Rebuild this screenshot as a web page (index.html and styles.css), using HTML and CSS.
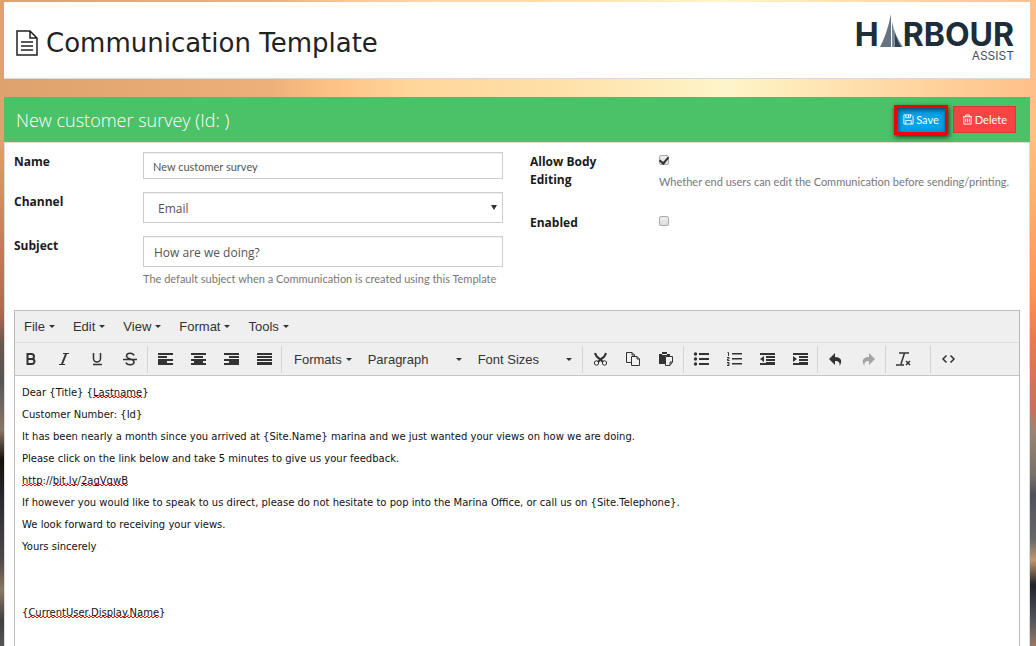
FILE: index.html
```html
<!DOCTYPE html>
<html lang="en">
<head>
<meta charset="utf-8">
<title>Communication Template</title>
<meta name="viewport" content="width=device-width, initial-scale=1">
<link rel="stylesheet" href="styles.css">
</head>
<body>
<header class="page-header">
  <h1 class="page-title">
    <svg class="title-icon" viewBox="0 0 22 26" aria-hidden="true"><path d="M1 1h13l7 7v17H1zM14 1v7h7M5 12h12M5 16h12M5 20h12"/></svg>
    <span>Communication Template</span>
  </h1>
  <div class="logo" role="img" aria-label="Harbour Assist">
    <div class="logo-main"><span>H</span><svg class="sail" viewBox="0 0 24 36" aria-hidden="true"><path class="sail-back" d="M1 33Q8 20 12 0V33Z"/><path class="sail-front" d="M13 8Q16 22 24 33H13Z"/><path class="sail-shade" d="M16 19Q19 28 22 33H16Z"/></svg><span>RBOUR</span></div>
    <div class="logo-sub">ASSIST</div>
  </div>
</header>
<main class="panel">
  <div class="panel-head">
    <h2 class="panel-title">New customer survey (Id: )</h2>
    <div class="actions">
      <button class="btn btn-save" type="button"><svg viewBox="0 0 12 12" aria-hidden="true"><path d="M1 1h8l2 2v8H1zM3 1v3h5V1M3 11V7h6v4M6 1v3"/></svg>Save</button>
      <button class="btn btn-delete" type="button"><svg viewBox="0 0 12 12" aria-hidden="true"><path d="M1 3h10M4 3V1h4v2M2 3v8h8V3M4 5v4M6 5v4M8 5v4"/></svg>Delete</button>
    </div>
  </div>
  <form class="panel-body">
    <div class="columns">
      <div class="column">
        <div class="field">
          <label class="label" for="name">Name</label>
          <div><input class="control control-small" id="name" type="text" value="New customer survey"></div>
        </div>
        <div class="field">
          <label class="label" for="channel">Channel</label>
          <div class="select-wrap"><select class="control control-select" id="channel"><option>Email</option></select></div>
        </div>
        <div class="field">
          <label class="label" for="subject">Subject</label>
          <div><input class="control" id="subject" type="text" value="How are we doing?"><p class="help">The default subject when a Communication is created using this Template</p></div>
        </div>
      </div>
      <div class="column column-right">
        <div class="field">
          <label class="label" for="editing">Allow Body Editing</label>
          <div><input class="check" id="editing" type="checkbox" checked><p class="help help-check">Whether end users can edit the Communication before sending/printing.</p></div>
        </div>
        <div class="field">
          <label class="label" for="enabled">Enabled</label>
          <div><input class="check" id="enabled" type="checkbox"></div>
        </div>
      </div>
    </div>
    <div class="editor">
      <div class="menubar">
        <button class="menu" type="button">File<i class="caret"></i></button>
        <button class="menu" type="button">Edit<i class="caret"></i></button>
        <button class="menu" type="button">View<i class="caret"></i></button>
        <button class="menu" type="button">Format<i class="caret"></i></button>
        <button class="menu" type="button">Tools<i class="caret"></i></button>
      </div>
      <div class="toolbar">
        <div class="group group-first">
          <button class="tool" type="button" aria-label="Bold"><svg viewBox="0 0 16 16"><path class="line thick" d="M4.500 3v10h4.500a2.500 2.500 0 0 0 0-5H5h3.500a2.500 2.500 0 0 0 0-5z"/></svg></button>
          <button class="tool" type="button" aria-label="Italic"><svg viewBox="0 0 16 16"><path class="line" d="M7 2.500h6M3 13.500h6"/><path class="line thick" d="M10 3L6 13"/></svg></button>
          <button class="tool" type="button" aria-label="Underline"><svg viewBox="0 0 16 16"><path class="line mid" d="M4.500 2v5.500a3.500 3.500 0 0 0 7 0V2M4 13.500h9"/></svg></button>
          <button class="tool" type="button" aria-label="Strikethrough"><svg viewBox="0 0 16 16"><path class="line mid" d="M12 4.500C11 1.500 4.500 1.500 4.500 5c0 3.500 7.500 2.500 7.500 6 0 3.500-7 3.500-8 .5M1 8.500h14"/></svg></button>
        </div>
        <div class="group">
          <button class="tool" type="button" aria-label="Align left"><svg viewBox="0 0 16 16"><path d="M1 2h15v2H1zM1 5h9v2H1zM1 8h15v2H1zM1 10h9v2H1zM1 12h15v2H1z"/></svg></button>
          <button class="tool" type="button" aria-label="Align center"><svg viewBox="0 0 16 16"><path d="M1 2h15v2H1zM4 5h9v2H4zM1 8h15v2H1zM4 10h9v2H4zM1 12h15v2H1z"/></svg></button>
          <button class="tool" type="button" aria-label="Align right"><svg viewBox="0 0 16 16"><path d="M1 2h15v2H1zM6 5h10v2H6zM1 8h15v2H1zM6 10h10v2H6zM1 12h15v2H1z"/></svg></button>
          <button class="tool" type="button" aria-label="Justify"><svg viewBox="0 0 16 16"><path d="M1 2h15v2H1zM1 5h15v2H1zM1 8h15v2H1zM1 11h15v3H1z"/></svg></button>
        </div>
        <div class="group group-menus">
          <button class="menu" type="button">Formats<i class="caret"></i></button>
          <button class="menu menu-wide" type="button">Paragraph<i class="caret"></i></button>
          <button class="menu menu-wide" type="button">Font Sizes<i class="caret"></i></button>
        </div>
        <div class="group">
          <button class="tool" type="button" aria-label="Cut"><svg viewBox="0 0 16 16"><path class="line thick" d="M3 2q1 4 5 6l3 3M14 2q-1 4-5 6l-3 3"/><circle class="line" cx="4.500" cy="12" r="2.200"/><circle class="line" cx="12.500" cy="12" r="2.200"/></svg></button>
          <button class="tool" type="button" aria-label="Copy"><svg viewBox="0 0 16 16"><path class="line thin" d="M6 11.500H1.500v-10H7L9.500 4v1M7 1.500V4h2.500M6.500 5.500H12L14.500 8v6.500h-8zM12 5.500V8h2.500"/></svg></button>
          <button class="tool" type="button" aria-label="Paste"><svg viewBox="0 0 16 16"><path d="M1 3h3V1h5v2h3v2H7v8H1z"/><path class="line thin" d="M7.500 5.500h7V11L12 14.500H7.500zM12 14v-3h2.500"/><path class="cut" d="M4 3h5v1H4z"/></svg></button>
        </div>
        <div class="group">
          <button class="tool" type="button" aria-label="Bullet list"><svg viewBox="0 0 16 16"><circle cx="2.500" cy="3" r="1.700"/><circle cx="2.500" cy="8" r="1.700"/><circle cx="2.500" cy="13" r="1.700"/><path d="M6 2h10v2H6zM6 7h10v2H6zM6 12h10v2H6z"/></svg></button>
          <button class="tool" type="button" aria-label="Numbered list"><svg viewBox="0 0 16 16"><path d="M6 2h10v1.500H6zM6 7h10v1.500H6zM6 12h10v1.500H6z"/><path class="line thin" d="M1.500 1.500h1V5M1 6.500h2V8H1.500v1.500H3.500M1 11.500h2v3H1M1.500 13H3"/></svg></button>
          <button class="tool" type="button" aria-label="Decrease indent"><svg viewBox="0 0 16 16"><path d="M1 2h15v2H1zM7 5h9v2H7zM7 8h9v2H7zM7 11h9v1H7zM1 12h15v2H1zM5 5v6L1 8z"/></svg></button>
          <button class="tool" type="button" aria-label="Increase indent"><svg viewBox="0 0 16 16"><path d="M1 2h15v2H1zM7 5h9v2H7zM7 8h9v2H7zM7 11h9v1H7zM1 12h15v2H1zM1 5v6l4-3z"/></svg></button>
        </div>
        <div class="group">
          <button class="tool" type="button" aria-label="Undo"><svg viewBox="0 0 16 16"><path d="M8 2v4c6 0 8 4 4.500 9 .5-4-1-5-4.500-5v4L2 8z"/></svg></button>
          <button class="tool" type="button" aria-label="Redo" disabled><svg viewBox="0 0 16 16"><path d="M9 2v4c-6 0-8 4-4.500 9-.5-4 1-5 4.500-5v4l6-6z"/></svg></button>
        </div>
        <div class="group group-clear">
          <button class="tool" type="button" aria-label="Clear formatting"><svg viewBox="0 0 16 16"><path class="line mid" d="M4 2h10M9.500 2L6 13M1 14h8M11 10l4 4M15 10l-4 4"/></svg></button>
        </div>
        <div class="group group-last">
          <button class="tool" type="button" aria-label="Source code"><svg viewBox="0 0 16 16"><path class="line mid" d="M6.500 4.500L3 8l3.500 3.500M10.500 4.500L14 8l-3.500 3.500"/></svg></button>
        </div>
      </div>
      <div class="content" role="textbox" aria-multiline="true" aria-label="Body" contenteditable="true" spellcheck="false">
        <p>Dear {Title} {<span class="misspelt">Lastname</span>}</p>
        <p>Customer Number: {Id}</p>
        <p>It has been nearly a month since you arrived at {Site.Name} marina and we just wanted your views on how we are doing.</p>
        <p>Please click on the link below and take 5 minutes to give us your feedback.</p>
        <p><span class="misspelt">http</span>://<span class="misspelt">bit.ly</span>/<span class="misspelt">2agVqwB</span></p>
        <p>If however you would like to speak to us direct, please do not hesitate to pop into the Marina Office, or call us on {Site.Telephone}.</p>
        <p>We look forward to receiving your views.</p>
        <p>Yours sincerely</p>
        <p><br></p>
        <p><br></p>
        <p>{<span class="misspelt">CurrentUser.Display.Name</span>}</p>
      </div>
    </div>
  </form>
</main>
</body>
</html>
```

FILE: styles.css
```css
* { box-sizing: border-box; }

body {
  margin: 0;
  min-height: 100vh;
  padding: 2px 6px 0 4px;
  display: flex;
  flex-direction: column;
  gap: 18px;
  font-family: "Open Sans", "Noto Sans", sans-serif;
  color: #222;
  background:
    linear-gradient(90deg, #dda26d 0, #eeb07a 26%, #fdc285 32%, #ffd79c 40%, #fee0a8 54%, #feefbf 65%, #fdf5cb 70%, #fee9b8 77%, #ffd09a 91%, #ffc08a 100%) top / 100% 100px no-repeat,
    linear-gradient(#dda26d 0, #dda26d 140px, #c87858 250px, #b06a50 310px, #6b5650 345px, #555 380px, #8a7868 430px, #15100d 460px, #303038 510px, #50484a 560px, #8a7864 590px, #404040 620px, #555 100%) left / 50% 100% no-repeat,
    linear-gradient(#ffc08a 0, #ffc080 140px, #ff9555 290px, #e87a50 340px, #c8705a 410px, #9c8672 430px, #777068 475px, #50505c 495px, #686868 540px, #c09870 560px, #202228 585px, #50545c 620px, #9a7860 100%) right / 50% 100% no-repeat;
}

h1, h2, p { margin: 0; font-weight: 400; }
button, input, select { font: inherit; color: inherit; }
svg { display: block; }

.page-header {
  display: flex;
  justify-content: space-between;
  height: 77px;
  padding: 12px 16px 0 12px;
  background: #fff;
  border-bottom: 1px solid #d8dadd;
}
.page-title {
  display: flex;
  align-items: center;
  gap: 8px;
  height: 58px;
  font-family: "DejaVu Sans", sans-serif;
  font-size: 26px;
  color: #222;
}
.title-icon { width: 22px; height: 26px; fill: none; stroke: #222; stroke-width: 1.5; }

.logo { color: #1d2d3b; font-family: Inter, sans-serif; }
.logo-main { display: flex; height: 36px; font-size: 32px; line-height: 42px; font-weight: 700; }
.sail { width: 24px; height: 36px; }
.sail-back { fill: #647482; }
.sail-front { fill: #7b8995; }
.sail-shade { fill: #304255; }
.logo-sub { text-align: right; font-size: 12px; line-height: 12px; color: #405060; }

.panel {
  flex: 1;
  display: flex;
  flex-direction: column;
  background: #fff;
}
.panel-head {
  display: flex;
  justify-content: space-between;
  align-items: center;
  height: 45px;
  padding: 0 14px 0 12px;
  background: #4bc168;
}
.panel-title { font-size: 18px; font-weight: 300; color: #fff; }
.actions { display: flex; align-items: center; gap: 5px; }
.btn {
  display: flex;
  align-items: center;
  gap: 2px;
  height: 27px;
  padding: 0 8px;
  border: 1px solid #d63a3a;
  font-family: Lato, sans-serif;
  font-size: 11px;
  color: #fff;
}
.btn svg { width: 11px; height: 11px; fill: none; stroke: #fff; stroke-width: 1; }
.btn-delete { background: #f64444; }
.btn-save {
  height: 30px;
  padding: 0 6px;
  border: 3px solid #f00000;
  background: #00a2e8;
  box-shadow: 1px 2px 5px rgba(0, 0, 0, .7), inset 1px 2px 5px rgba(0, 0, 0, .6);
}
.panel-body {
  flex: 1;
  display: flex;
  flex-direction: column;
  gap: 23px;
  padding: 9px 9px 0;
  border: 1px solid #ddd;
  border-bottom: 0;
}
.columns { display: grid; grid-template-columns: 489px 1fr; gap: 27px; }
.column { display: flex; flex-direction: column; gap: 13px; }
.column-right { gap: 23px; }
.field { display: grid; grid-template-columns: 129px 1fr; }
.label { padding-top: 1px; font-size: 12px; line-height: 18px; font-weight: 700; color: #1a1a1a; }
.column-right .label { padding-right: 48px; }
.control {
  display: block;
  width: 100%;
  height: 31px;
  padding: 2px 10px 0;
  border: 1px solid #ccc;
  border-radius: 0;
  background: #fff;
  box-shadow: inset 0 1px 1px rgba(0, 0, 0, .06);
  font-size: 12px;
  color: #555;
  outline: 0;
}
.control-small { height: 27px; padding: 1px 9px 0; font-family: Lato, sans-serif; font-size: 11px; }
.control-select { appearance: none; padding: 2px 14px 0; }
.select-wrap { display: grid; }
.select-wrap > *, .select-wrap::after { grid-area: 1 / 1; }
.select-wrap::after {
  content: "";
  place-self: center end;
  margin-right: 6px;
  border: 3px solid transparent;
  border-top: 5px solid #333;
  border-bottom: 0;
  pointer-events: none;
}
.help { margin-top: 4px; font-family: Lato, sans-serif; font-size: 11px; line-height: 16px; color: #777; }
.help-check { margin-top: 9px; }
.check {
  appearance: none;
  display: grid;
  place-content: center;
  width: 10px;
  height: 10px;
  margin: 3px 0 0;
  border: 1px solid #aaa;
  border-radius: 2px;
  background: linear-gradient(#eee, #ddd);
}
.check:checked::before {
  content: "";
  width: 4px;
  height: 7px;
  margin-bottom: 2px;
  border: solid #333;
  border-width: 0 2px 2px 0;
  transform: rotate(40deg);
}

.editor {
  flex: 1;
  display: flex;
  flex-direction: column;
  border: 1px solid #bbb;
  border-bottom: 0;
  font-family: "Liberation Sans", Arial, sans-serif;
}
.menubar, .toolbar { display: flex; align-items: center; background: #efefef; }
.menubar { height: 32px; gap: 2px; padding: 0 1px; border-bottom: 1px solid #ddd; }
.toolbar { height: 33px; border-bottom: 1px solid #c4c4c4; }
.menu {
  display: flex;
  align-items: center;
  gap: 4px;
  height: 28px;
  padding: 0 8px;
  border: 0;
  background: none;
  font-size: 13px;
  color: #333;
  white-space: nowrap;
}
.menu-wide { width: 110px; justify-content: space-between; }
.caret { border: 3px solid transparent; border-top-color: #333; border-bottom: 0; }
.group { display: flex; height: 27px; align-items: center; border-right: 1px solid #d4d4d4; padding: 0 0 0 1px; }
.group-first { padding-left: 0; }
.group-menus { padding: 0 2px 0 4px; }
.group-clear { padding-right: 10px; }
.group-last { border: 0; }
.tool { width: 33px; height: 28px; padding: 0 8px; border: 0; background: none; color: #333; }
.tool svg { width: 16px; height: 16px; fill: #333; }
.tool:disabled { opacity: .4; }
.tool .line { fill: none; stroke: #333; stroke-width: 1; }
.tool .mid { stroke-width: 1.5; }
.tool .thick { stroke-width: 2; }
.tool .cut { fill: #efefef; }
.content {
  flex: 1;
  padding: 11px 7px;
  font-family: "DejaVu Sans", sans-serif;
  font-size: 10px;
  line-height: 12px;
  color: #111;
  outline: 0;
}
.content p { margin-bottom: 10px; }
.misspelt {
  background:
    repeating-linear-gradient(90deg, #f00 0 2px, transparent 2px 4px) 0 100% / 100% 1px no-repeat,
    repeating-linear-gradient(90deg, transparent 0 2px, #f00 2px 4px) 0 calc(100% - 1px) / 100% 1px no-repeat;
}
```
